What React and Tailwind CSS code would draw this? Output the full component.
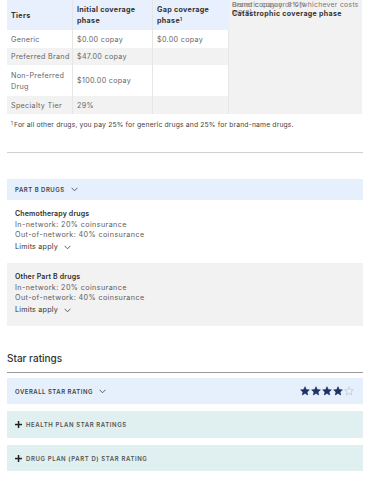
import React from "react";

const font = { fontFamily: "Inter, 'Open Sans', sans-serif" };

function Chevron() {
  return (
    <svg width="7" height="5" viewBox="0 0 7 5" className="ml-[6px]">
      <polyline points="0.6,0.8 3.5,3.8 6.4,0.8" fill="none" stroke="#4a4f63" strokeWidth="0.9" />
    </svg>
  );
}

function Plus() {
  return (
    <svg width="7" height="7" viewBox="0 0 7 7" className="mr-[4px]">
      <rect x="2.8" y="0" width="1.5" height="7" fill="#222" />
      <rect x="0" y="2.8" width="7" height="1.5" fill="#222" />
    </svg>
  );
}

function Star({ filled }) {
  return (
    <svg width="10" height="10" viewBox="0 0 24 24">
      <polygon
        points="12,1.8 15,8.6 22.4,9.3 16.8,14.2 18.5,21.5 12,17.6 5.5,21.5 7.2,14.2 1.6,9.3 9,8.6"
        fill={filled ? "#1f3464" : "none"}
        stroke={filled ? "#1f3464" : "#b9c2d3"}
        strokeWidth="1.6"
        strokeLinejoin="round"
      />
    </svg>
  );
}

function Cell({ children, className = "" }) {
  return (
    <div className={`flex items-center whitespace-nowrap border-r border-[#e6e6e6] px-[4px] text-[7.2px] leading-[11px] ${className}`}>
      {children}
    </div>
  );
}

const body = "text-[#666] tracking-[0.3px]";
const head = "bg-[#e8f0fd] font-bold text-[#333] tracking-[0.3px]";

function DrugBlock({ title, gray }) {
  return (
    <div className={`px-[8px] pt-[9px] pb-[11px] ${gray ? "bg-[#f2f2f2]" : "bg-white"}`}>
      <div className="text-[7px] leading-[10.5px] font-semibold tracking-[0.15px] text-[#2e2e2e]">{title}</div>
      <div className="text-[7.2px] leading-[10.5px] tracking-[0.4px] text-[#5c5c5c]">In-network: 20% coinsurance</div>
      <div className="text-[7.2px] leading-[10.5px] tracking-[0.4px] text-[#5c5c5c]">Out-of-network: 40% coinsurance</div>
      <div className="mt-[1.5px] flex items-center text-[7.2px] leading-[10px] tracking-[0.2px] text-[#333]">
        Limits apply
        <Chevron />
      </div>
    </div>
  );
}

export default function App() {
  return (
    <div className="w-[370px] h-[480px] bg-white overflow-hidden px-[7px]" style={font}>
      {/* Table */}
      <div className="flex w-[355px]">
        <div className="grid w-[222px] grid-cols-[66px_80px_76px]">
          <Cell className={`h-[30px] ${head}`}>Tiers</Cell>
          <Cell className={`h-[30px] ${head}`}>
            <span>Initial coverage<br />phase</span>
          </Cell>
          <Cell className={`h-[30px] ${head} border-r-0`}>
            <span>
              Gap coverage<br />phase<span className="relative -top-[2.5px] text-[4.5px] leading-[0]">1</span>
            </span>
          </Cell>

          <Cell className={`h-[18px] bg-white ${body}`}>Generic</Cell>
          <Cell className={`h-[18px] bg-white ${body}`}>$0.00 copay</Cell>
          <Cell className={`h-[18px] bg-white ${body}`}>$0.00 copay</Cell>

          <Cell className={`h-[17px] bg-[#f2f2f2] ${body}`}>Preferred Brand</Cell>
          <Cell className={`h-[17px] bg-[#f2f2f2] ${body}`}>$47.00 copay</Cell>
          <Cell className="h-[17px] bg-[#f2f2f2]"></Cell>

          <Cell className={`h-[31px] bg-white ${body}`}>
            <span>Non-Preferred<br />Drug</span>
          </Cell>
          <Cell className={`h-[31px] bg-white ${body}`}>$100.00 copay</Cell>
          <Cell className="h-[31px] bg-white"></Cell>

          <Cell className={`h-[18px] bg-[#f2f2f2] ${body}`}>Specialty Tier</Cell>
          <Cell className={`h-[18px] bg-[#f2f2f2] ${body}`}>29%</Cell>
          <Cell className="h-[18px] bg-[#f2f2f2]"></Cell>
        </div>
        <div className="relative flex-1 bg-[#f2f2f2]">
          <div className="absolute left-[3px] top-[1px] text-[6.8px] leading-[7px] tracking-[0.3px] text-[#777]">
            Brand copay or 8%(whichever costs
            <br />
            more)
          </div>
          <div className="absolute left-[3px] top-[1px] text-[6.8px] leading-[7px] tracking-[0.3px] text-[#888]">
            Generic copay or 0%
          </div>
          <div className="absolute left-[3px] top-[10px] text-[7px] leading-[8px] font-bold tracking-[0.35px] text-[#333]">
            Catastrophic coverage phase
          </div>
        </div>
      </div>

      {/* Footnote */}
      <div className="h-[19px] pl-[4px] pt-[6px] text-[6.8px] leading-[9px] tracking-[0.15px] text-[#444]">
        <span className="relative -top-[2px] mr-[1px] text-[4.5px] leading-[0]">1</span>For all other drugs, you pay 25% for generic drugs and 25% for brand-name drugs.
      </div>

      <div className="mt-[19px] h-px bg-[#cfcfcf]" />

      {/* Part B drugs */}
      <div className="mt-[26px] flex h-[21px] items-center bg-[#e6effc] px-[8px] text-[6px] font-semibold tracking-[0.5px] text-[#444]">
        PART B DRUGS
        <Chevron />
      </div>
      <DrugBlock title="Chemotherapy drugs" />
      <DrugBlock title="Other Part B drugs" gray />

      {/* Star ratings */}
      <div className="mt-[25px] text-[10px] leading-[14px] font-medium text-[#333]">Star ratings</div>
      <div className="mt-[7px] h-px bg-[#9a9a9a]" />

      <div className="mt-[5px] flex h-[26px] items-center justify-between bg-[#e6effc] px-[8px] text-[6px] font-semibold tracking-[0.5px] text-[#444]">
        <div className="flex items-center">
          OVERALL STAR RATING
          <Chevron />
        </div>
        <div className="flex items-center gap-[1px] pr-[1px]">
          <Star filled />
          <Star filled />
          <Star filled />
          <Star filled />
          <Star />
        </div>
      </div>

      <div className="mt-[7px] flex h-[27px] items-center bg-[#e0f0f0] px-[8px] text-[6px] font-semibold tracking-[0.6px] text-[#555]">
        <Plus />
        HEALTH PLAN STAR RATINGS
      </div>
      <div className="mt-[7px] flex h-[26px] items-center bg-[#e0f0f0] px-[8px] text-[6px] font-semibold tracking-[0.6px] text-[#555]">
        <Plus />
        DRUG PLAN (PART D) STAR RATING
      </div>
    </div>
  );
}
